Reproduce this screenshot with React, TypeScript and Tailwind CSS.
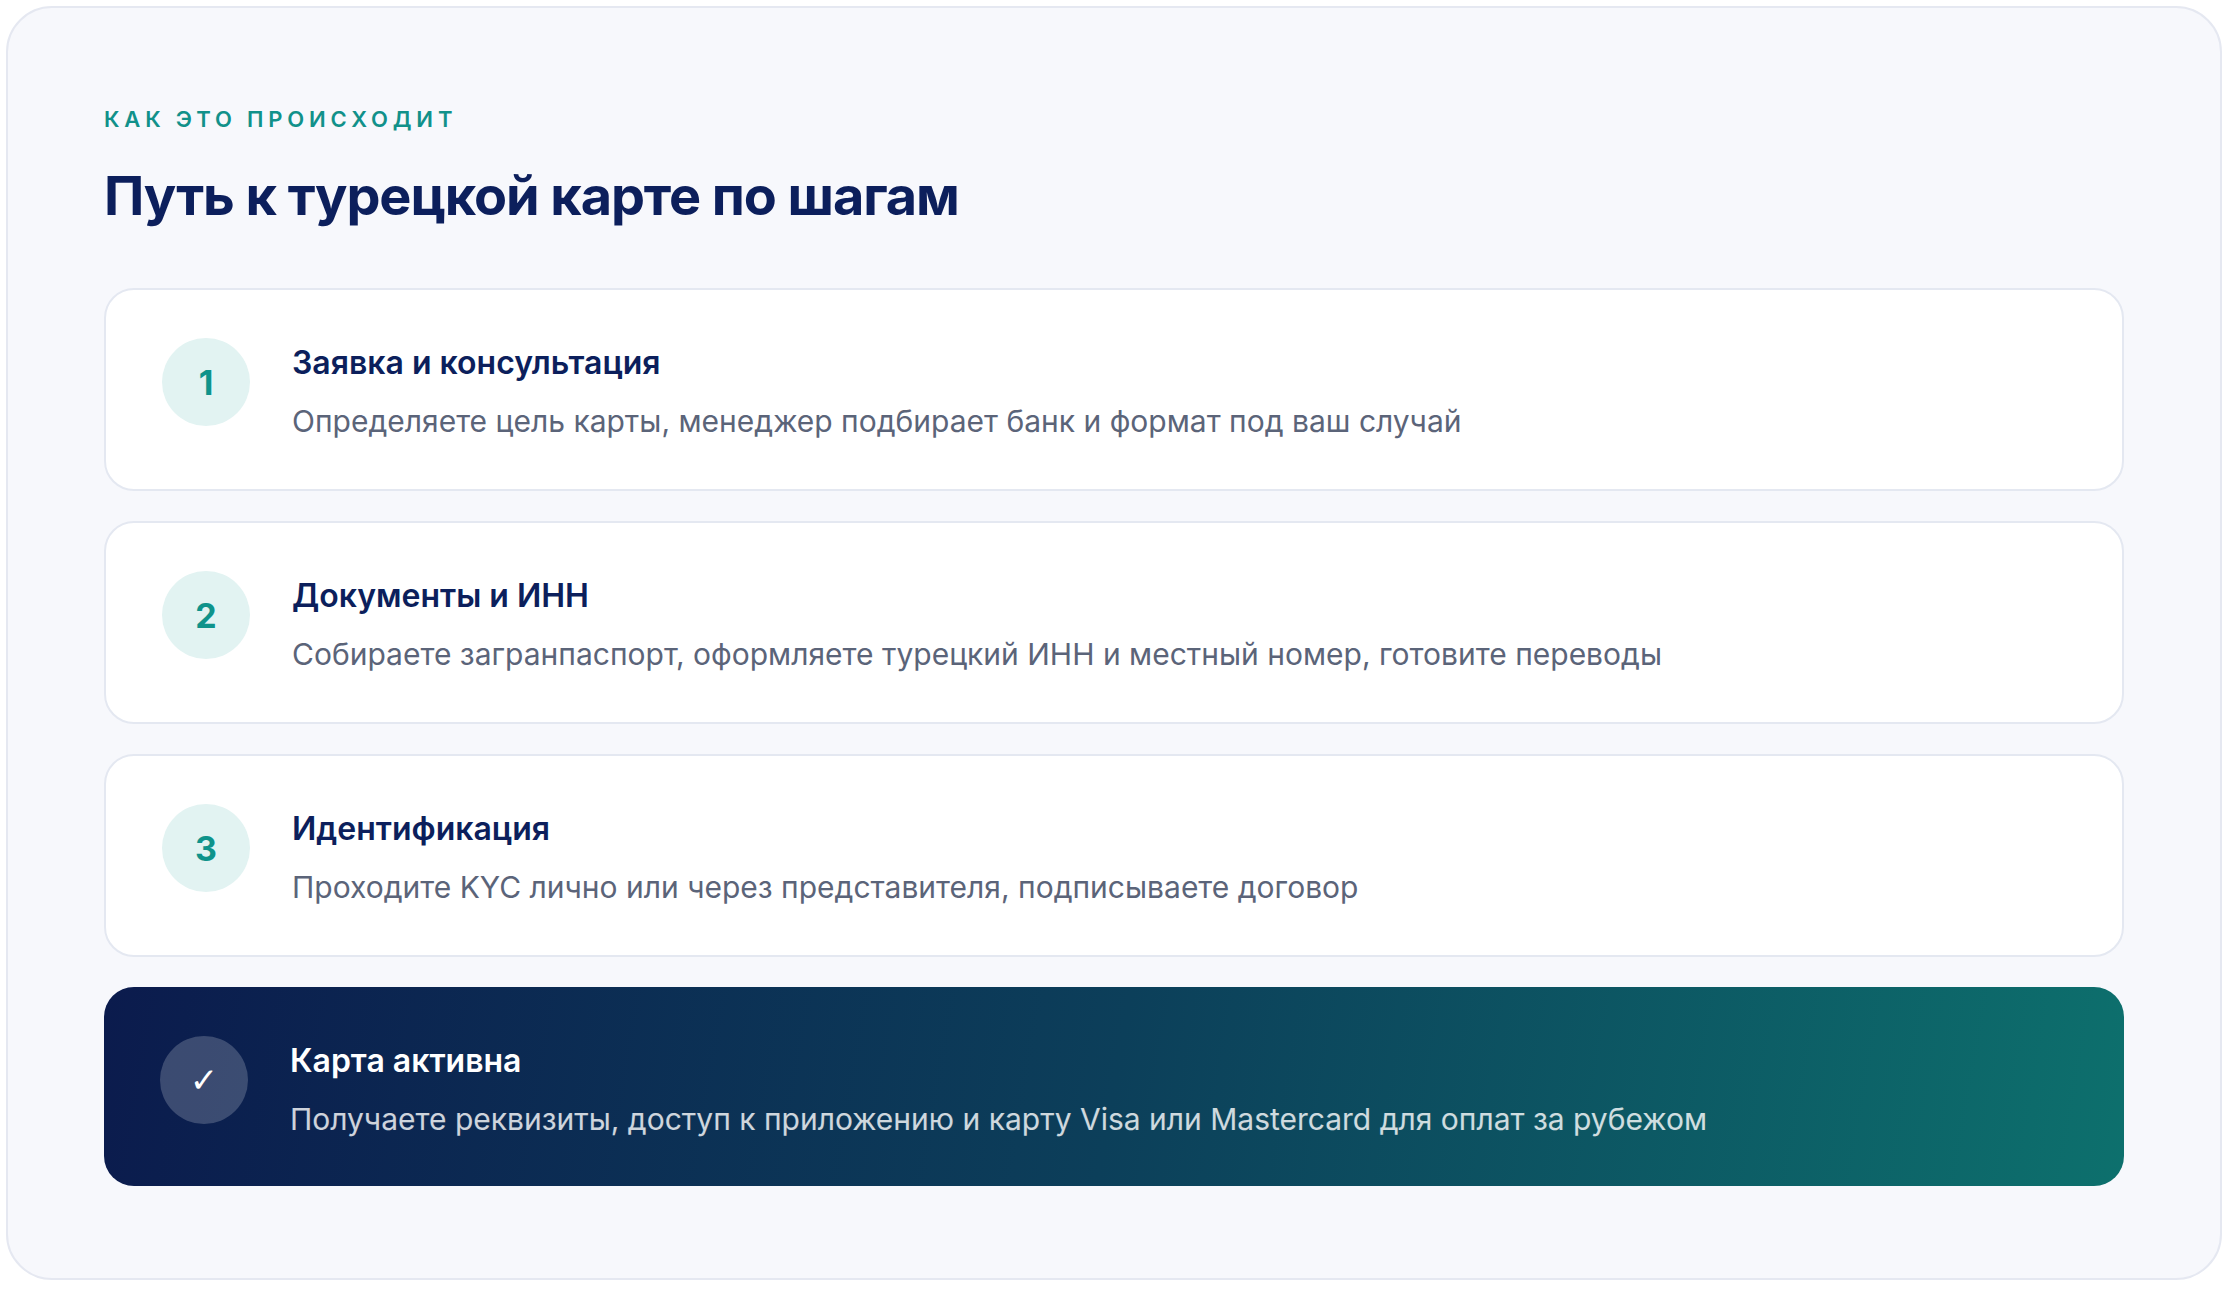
import React from "react";

const steps = [
  {
    n: "1",
    title: "Заявка и консультация",
    desc: "Определяете цель карты, менеджер подбирает банк и формат под ваш случай",
  },
  {
    n: "2",
    title: "Документы и ИНН",
    desc: "Собираете загранпаспорт, оформляете турецкий ИНН и местный номер, готовите переводы",
  },
  {
    n: "3",
    title: "Идентификация",
    desc: "Проходите KYC лично или через представителя, подписываете договор",
  },
];

export default function App() {
  return (
    <div
      className="min-h-screen bg-white p-[6px]"
      style={{ fontFamily: 'Inter, "Noto Sans", sans-serif' }}
    >
      <section className="rounded-[46px] border-2 border-[#e5e8f1] bg-[#f7f8fc] px-[96px] pt-[96px] pb-[92px]">
        <div className="text-[22px] leading-[30px] font-semibold tracking-[0.22em] text-[#11918a]">
          КАК ЭТО ПРОИСХОДИТ
        </div>
        <h2 className="mt-[29px] text-[54px] leading-[65px] font-bold tracking-[-0.02em] text-[#0c1f5c]">
          Путь к турецкой карте по шагам
        </h2>
        <div className="mt-[60px] flex flex-col gap-[30px]">
          {steps.map((s) => (
            <div
              key={s.n}
              className="flex items-start gap-[42px] rounded-[30px] border-2 border-[#e4e8f1] bg-white px-[56px] pt-[48px] pb-[47px]"
            >
              <div className="flex h-[88px] w-[88px] shrink-0 items-center justify-center rounded-full bg-[#e2f3f2] text-[34px] font-bold text-[#0f938b]">
                {s.n}
              </div>
              <div className="pt-[3px]">
                <div className="text-[32px] leading-[44px] font-semibold text-[#0c1f5c]">
                  {s.title}
                </div>
                <div className="mt-[15px] text-[30px] leading-[42px] font-normal text-[#5b6479]">
                  {s.desc}
                </div>
              </div>
            </div>
          ))}
          <div className="flex items-start gap-[42px] rounded-[30px] bg-[linear-gradient(100deg,#0b1b4d_0%,#0c3f5a_50%,#0d706d_100%)] px-[56px] pt-[49px] pb-[46px]">
            <div
              className="flex h-[88px] w-[88px] shrink-0 items-center justify-center rounded-full bg-white/20 text-[34px] text-white"
              style={{ fontFamily: '"DejaVu Sans", sans-serif' }}
            >
              ✓
            </div>
            <div className="pt-[3px]">
              <div className="text-[32px] leading-[44px] font-semibold text-white">
                Карта активна
              </div>
              <div className="mt-[15px] text-[30px] leading-[42px] font-normal text-white/80">
                Получаете реквизиты, доступ к приложению и карту Visa или Mastercard для оплат за рубежом
              </div>
            </div>
          </div>
        </div>
      </section>
    </div>
  );
}
